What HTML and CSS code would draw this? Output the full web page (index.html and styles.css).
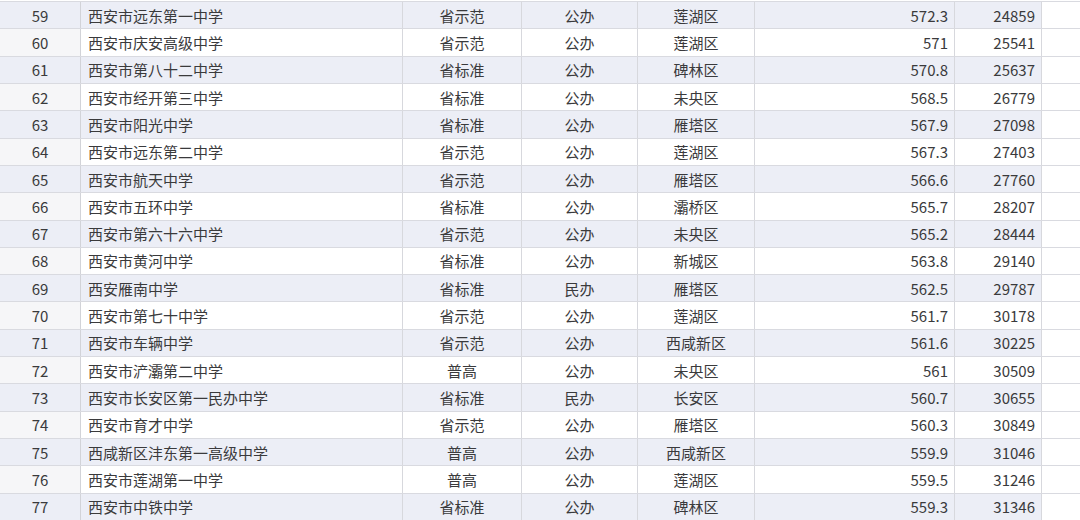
FILE: index.html
```html
<!DOCTYPE html>
<html lang="zh-CN">
<head>
<meta charset="utf-8">
<link rel="stylesheet" href="styles.css">
</head>
<body>
<div class="sheet">
  <div class="row shade"><div class="c idx">59</div><div class="c name">西安市远东第一中学</div><div class="c mid">省示范</div><div class="c mid">公办</div><div class="c mid">莲湖区</div><div class="c num">572.3</div><div class="c num">24859</div></div>
  <div class="row"><div class="c idx">60</div><div class="c name">西安市庆安高级中学</div><div class="c mid">省示范</div><div class="c mid">公办</div><div class="c mid">莲湖区</div><div class="c num">571</div><div class="c num">25541</div></div>
  <div class="row shade"><div class="c idx">61</div><div class="c name">西安市第八十二中学</div><div class="c mid">省标准</div><div class="c mid">公办</div><div class="c mid">碑林区</div><div class="c num">570.8</div><div class="c num">25637</div></div>
  <div class="row"><div class="c idx">62</div><div class="c name">西安市经开第三中学</div><div class="c mid">省标准</div><div class="c mid">公办</div><div class="c mid">未央区</div><div class="c num">568.5</div><div class="c num">26779</div></div>
  <div class="row shade"><div class="c idx">63</div><div class="c name">西安市阳光中学</div><div class="c mid">省标准</div><div class="c mid">公办</div><div class="c mid">雁塔区</div><div class="c num">567.9</div><div class="c num">27098</div></div>
  <div class="row"><div class="c idx">64</div><div class="c name">西安市远东第二中学</div><div class="c mid">省示范</div><div class="c mid">公办</div><div class="c mid">莲湖区</div><div class="c num">567.3</div><div class="c num">27403</div></div>
  <div class="row shade"><div class="c idx">65</div><div class="c name">西安市航天中学</div><div class="c mid">省示范</div><div class="c mid">公办</div><div class="c mid">雁塔区</div><div class="c num">566.6</div><div class="c num">27760</div></div>
  <div class="row"><div class="c idx">66</div><div class="c name">西安市五环中学</div><div class="c mid">省标准</div><div class="c mid">公办</div><div class="c mid">灞桥区</div><div class="c num">565.7</div><div class="c num">28207</div></div>
  <div class="row shade"><div class="c idx">67</div><div class="c name">西安市第六十六中学</div><div class="c mid">省示范</div><div class="c mid">公办</div><div class="c mid">未央区</div><div class="c num">565.2</div><div class="c num">28444</div></div>
  <div class="row"><div class="c idx">68</div><div class="c name">西安市黄河中学</div><div class="c mid">省标准</div><div class="c mid">公办</div><div class="c mid">新城区</div><div class="c num">563.8</div><div class="c num">29140</div></div>
  <div class="row shade"><div class="c idx">69</div><div class="c name">西安雁南中学</div><div class="c mid">省标准</div><div class="c mid">民办</div><div class="c mid">雁塔区</div><div class="c num">562.5</div><div class="c num">29787</div></div>
  <div class="row"><div class="c idx">70</div><div class="c name">西安市第七十中学</div><div class="c mid">省示范</div><div class="c mid">公办</div><div class="c mid">莲湖区</div><div class="c num">561.7</div><div class="c num">30178</div></div>
  <div class="row shade"><div class="c idx">71</div><div class="c name">西安市车辆中学</div><div class="c mid">省示范</div><div class="c mid">公办</div><div class="c mid">西咸新区</div><div class="c num">561.6</div><div class="c num">30225</div></div>
  <div class="row"><div class="c idx">72</div><div class="c name">西安市浐灞第二中学</div><div class="c mid">普高</div><div class="c mid">公办</div><div class="c mid">未央区</div><div class="c num">561</div><div class="c num">30509</div></div>
  <div class="row shade"><div class="c idx">73</div><div class="c name">西安市长安区第一民办中学</div><div class="c mid">省标准</div><div class="c mid">民办</div><div class="c mid">长安区</div><div class="c num">560.7</div><div class="c num">30655</div></div>
  <div class="row"><div class="c idx">74</div><div class="c name">西安市育才中学</div><div class="c mid">省示范</div><div class="c mid">公办</div><div class="c mid">雁塔区</div><div class="c num">560.3</div><div class="c num">30849</div></div>
  <div class="row shade"><div class="c idx">75</div><div class="c name">西咸新区沣东第一高级中学</div><div class="c mid">普高</div><div class="c mid">公办</div><div class="c mid">西咸新区</div><div class="c num">559.9</div><div class="c num">31046</div></div>
  <div class="row"><div class="c idx">76</div><div class="c name">西安市莲湖第一中学</div><div class="c mid">普高</div><div class="c mid">公办</div><div class="c mid">莲湖区</div><div class="c num">559.5</div><div class="c num">31246</div></div>
  <div class="row shade"><div class="c idx">77</div><div class="c name">西安市中铁中学</div><div class="c mid">省标准</div><div class="c mid">公办</div><div class="c mid">碑林区</div><div class="c num">559.3</div><div class="c num">31346</div></div>
</div>
</body>
</html>
```

FILE: styles.css
```css
html, body {
  margin: 0;
  padding: 0;
  background: #ffffff;
}
body {
  width: 1080px;
  height: 520px;
  overflow: hidden;
  font-family: "Noto Sans CJK SC", "Noto Sans", sans-serif;
  font-size: 15px;
  color: #3a3a3c;
}
.sheet {
  padding-top: 1px;
  display: grid;
  grid-auto-rows: 27.32px;
}
.row {
  display: grid;
  grid-template-columns: 81px 322px 119px 116px 117px 200px 87px;
  border-top: 1px solid #d9dae0;
  box-sizing: border-box;
}
.row.shade .c {
  background: #eceef6;
}
.c {
  display: flex;
  align-items: center;
  border-right: 1px solid #d7d8dd;
  box-sizing: border-box;
  white-space: nowrap;
  background: #ffffff;
}
.c.idx {
  justify-content: center;
  background: #f6f6f8;
  border-right-color: #d2d3d8;
}
.c.name {
  padding-left: 7px;
}
.c.mid {
  justify-content: center;
}
.c.num {
  justify-content: flex-end;
  padding-right: 6px;
}
```
